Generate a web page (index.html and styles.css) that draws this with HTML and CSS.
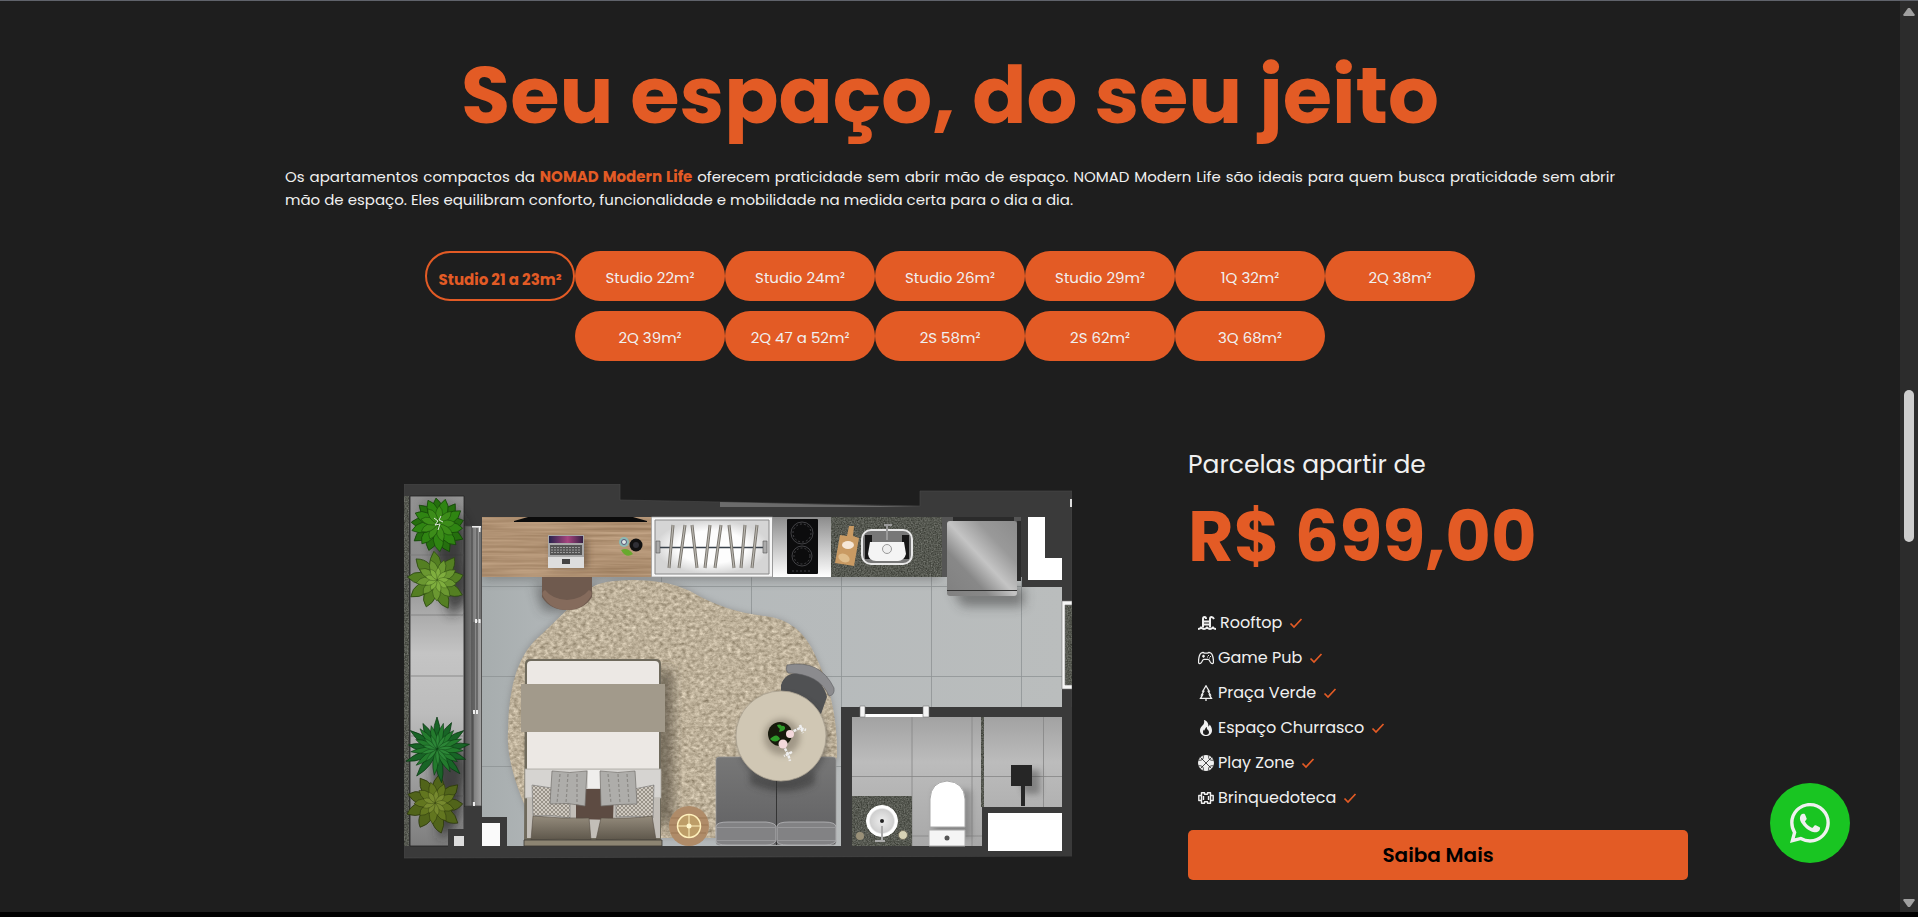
FILE: index.html
```
<!DOCTYPE html>
<html lang="pt-BR">
<head>
<meta charset="utf-8">
<title>NOMAD Modern Life</title>
<link rel="stylesheet" href="styles.css">
</head>
<body>
<div class="page">
<main class="content">
  <section class="intro">
    <h1 class="title">Seu espaço, do seu jeito</h1>
    <p class="lead">Os apartamentos compactos da <strong class="brand">NOMAD Modern Life</strong> oferecem praticidade sem abrir mão de espaço. NOMAD Modern Life são ideais para quem busca praticidade sem abrir mão de espaço. Eles equilibram conforto, funcionalidade e mobilidade na medida certa para o dia a dia.</p>
    <div class="tabs">
      <button class="tab tab-active" type="button">Studio 21 a 23m²</button>
      <button class="tab" type="button">Studio 22m²</button>
      <button class="tab" type="button">Studio 24m²</button>
      <button class="tab" type="button">Studio 26m²</button>
      <button class="tab" type="button">Studio 29m²</button>
      <button class="tab" type="button">1Q 32m²</button>
      <button class="tab" type="button">2Q 38m²</button>
      <button class="tab" type="button">2Q 39m²</button>
      <button class="tab" type="button">2Q 47 a 52m²</button>
      <button class="tab" type="button">2S 58m²</button>
      <button class="tab" type="button">2S 62m²</button>
      <button class="tab" type="button">3Q 68m²</button>
    </div>
  </section>

  <section class="offer">
    <div class="plan">
      <svg class="plan-drawing" viewBox="404 484 668 375" role="img" aria-label="Planta do studio">
        <defs>
          <filter id="rugTex" x="0" y="0" width="1" height="1" color-interpolation-filters="sRGB">
            <feTurbulence type="fractalNoise" baseFrequency=".22 .3" numOctaves="5" seed="4"/>
            <feColorMatrix values=".35 .25 0 0 .44  .35 .25 0 0 .39  .35 .25 0 0 .3  0 0 0 0 1"/>
            <feComposite in2="SourceGraphic" operator="in"/>
          </filter>
          <filter id="granite" x="0" y="0" width="1" height="1" color-interpolation-filters="sRGB">
            <feTurbulence type="fractalNoise" baseFrequency=".7" numOctaves="3" seed="8"/>
            <feColorMatrix values=".35 0 0 0 .16  .35 0 0 0 .17  .35 0 0 0 .14  0 0 0 0 1"/>
            <feComposite in2="SourceGraphic" operator="in"/>
          </filter>
          <filter id="woodTex" x="0" y="0" width="1" height="1" color-interpolation-filters="sRGB">
            <feTurbulence type="fractalNoise" baseFrequency=".012 .35" numOctaves="3" seed="3"/>
            <feColorMatrix values=".2 0 0 0 .59  .2 0 0 0 .47  .2 0 0 0 .35  0 0 0 0 1"/>
            <feComposite in2="SourceGraphic" operator="in"/>
          </filter>
          <filter id="soft" x="-50%" y="-50%" width="200%" height="200%"><feGaussianBlur stdDeviation="6"/></filter>
          <filter id="softer" x="-50%" y="-50%" width="200%" height="200%"><feGaussianBlur stdDeviation="3"/></filter>
          <linearGradient id="balcony" x2="0" y2="1"><stop offset="0" stop-color="#929292"/><stop offset=".2" stop-color="#8b8b8b"/><stop offset=".45" stop-color="#c4c4c4"/><stop offset=".62" stop-color="#bcbcbc"/><stop offset="1" stop-color="#7e7e7e"/></linearGradient>
          <linearGradient id="rail"><stop offset="0" stop-color="#555"/><stop offset=".6" stop-color="#858585"/><stop offset="1" stop-color="#a5a5a5"/></linearGradient>
          <linearGradient id="floor"><stop offset="0" stop-color="#a7adae"/><stop offset=".15" stop-color="#b3b8ba"/><stop offset="1" stop-color="#babdbd"/></linearGradient>
          <linearGradient id="steel" x1="0" y1="1" x2="1" y2="0"><stop offset="0" stop-color="#808080"/><stop offset=".3" stop-color="#888"/><stop offset=".5" stop-color="#c4c4c4"/><stop offset=".72" stop-color="#999"/><stop offset="1" stop-color="#8c8c8c"/></linearGradient>
          <linearGradient id="panel" x2="0" y2="1"><stop offset="0" stop-color="#8c8c8c"/><stop offset="1" stop-color="#fff"/></linearGradient>
          <linearGradient id="bath" x2="0" y2="1"><stop offset="0" stop-color="#a2a2a2"/><stop offset=".35" stop-color="#bcbcbc"/><stop offset="1" stop-color="#a8a8a8"/></linearGradient>
          <radialGradient id="closet"><stop offset=".6" stop-color="#fdfdfd"/><stop offset="1" stop-color="#d5d5d5"/></radialGradient>
          <radialGradient id="basin"><stop offset="0" stop-color="#eee"/><stop offset=".75" stop-color="#cfcfcf"/><stop offset=".85" stop-color="#fff"/></radialGradient>
          <linearGradient id="screen"><stop offset="0" stop-color="#27234e"/><stop offset=".55" stop-color="#a8447f"/><stop offset="1" stop-color="#352044"/></linearGradient>
          <linearGradient id="pillow" x2="0" y2="1"><stop offset="0" stop-color="#948b7c"/><stop offset="1" stop-color="#5e574b"/></linearGradient>
          <linearGradient id="sofa" x2="0" y2="1"><stop offset="0" stop-color="#777"/><stop offset="1" stop-color="#606062"/></linearGradient>
          <pattern id="knit" width="4" height="4" patternUnits="userSpaceOnUse"><path fill="#cfc9c0" d="M0 0h4v4H0z"/><path stroke="#8c857b" stroke-width=".8" d="M0 0l4 4M4 0L0 4"/></pattern>
          <g id="broad">
            <path d="M0 0Q-11-14-2-28Q11-18 0 0"/><path d="M0 0Q-11-14-2-28Q11-18 0 0" transform="rotate(42)"/><path d="M0 0Q-11-14-2-26Q11-18 0 0" transform="rotate(82)"/><path d="M0 0Q-11-14-2-28Q11-18 0 0" transform="rotate(122)"/><path d="M0 0Q-11-14-2-28Q11-18 0 0" transform="rotate(160)"/><path d="M0 0Q-11-14-2-26Q11-18 0 0" transform="rotate(205)"/><path d="M0 0Q-11-14-2-28Q11-18 0 0" transform="rotate(242)"/><path d="M0 0Q-11-14-2-27Q11-18 0 0" transform="rotate(282)"/><path d="M0 0Q-11-14-2-28Q11-18 0 0" transform="rotate(322)"/>
          </g>
          <g id="spiky">
            <path d="M0 0Q-7-16 0-33Q7-14 0 0"/><path d="M0 0Q-7-16 0-31Q7-14 0 0" transform="rotate(28)"/><path d="M0 0Q-7-16 0-33Q7-14 0 0" transform="rotate(54)"/><path d="M0 0Q-7-16 0-33Q7-14 0 0" transform="rotate(80)"/><path d="M0 0Q-7-16 0-30Q7-14 0 0" transform="rotate(108)"/><path d="M0 0Q-7-16 0-33Q7-14 0 0" transform="rotate(136)"/><path d="M0 0Q-7-16 0-33Q7-14 0 0" transform="rotate(172)"/><path d="M0 0Q-7-16 0-33Q7-14 0 0" transform="rotate(218)"/><path d="M0 0Q-7-16 0-33Q7-14 0 0" transform="rotate(250)"/><path d="M0 0Q-7-16 0-29Q7-14 0 0" transform="rotate(280)"/><path d="M0 0Q-7-16 0-33Q7-14 0 0" transform="rotate(306)"/><path d="M0 0Q-7-16 0-30Q7-14 0 0" transform="rotate(332)"/>
          </g>
          <clipPath id="room"><path d="M482 577H1062V707H841V846H482z"/></clipPath>
          <clipPath id="terrace"><path d="M404 484H482V846H404z"/></clipPath>
        </defs>

        <!-- walls -->
        <path fill="#3a3a3a" stroke="#4b4b4b" stroke-width=".6" d="M404 484H620V500L920 506V491H1072V856L404 858z"/>
        <path fill="#6b6b6b" d="M720 502L920 507H720z"/>
        <path fill="#ddd" d="M1070 499h2v8h-2z"/>

        <!-- balcony -->
        <path filter="url(#granite)" d="M404 496h5v350h-5z"/>
        <path fill="url(#balcony)" stroke="#222" stroke-width=".8" d="M410 496h54v350h-54z"/>
        <path stroke="#777" stroke-width=".7" d="M410 555h54M410 615h54M410 676h54M410 736h54M410 796h54"/>
        <g clip-path="url(#terrace)">
          <path fill="#222" opacity=".75" filter="url(#soft)" d="M424 505Q475 500 466 560Q480 600 450 616L440 580zM430 738Q480 738 464 790Q462 826 440 840z"/>
        </g>
        <path fill="url(#rail)" stroke="#444" stroke-width=".7" d="M465 526h16.500v280H465z"/>
        <path fill="none" stroke="#444" d="M472 526v280M477 528v92M480 528v92M474 622v88M477 622v88M473 712v90"/>
        <path fill="#eee" d="M472 526h9v1.500h-9zM479 526h1.500v6H479zM475 619h2v4h-2zM478.500 619h2v4h-2zM473 710h2v4h-2zM476 710h2v4h-2zM473 802h2v4h-2z"/>
        <g stroke-width=".7">
          <g fill="#256f0e" stroke="#123f08"><use href="#broad" transform="translate(438 526)"/><use href="#broad" fill="#2f8512" transform="translate(438 525) rotate(20) scale(.95)"/><use href="#broad" fill="#3c8d19" transform="translate(438 524) rotate(8) scale(.65)"/></g>
          <g fill="#547f22" stroke="#294610"><use href="#broad" transform="translate(436 581) scale(1.060)"/><use href="#broad" fill="#6b9831" transform="translate(437 580) rotate(24) scale(.75)"/><use href="#broad" fill="#7fae3e" transform="translate(437 580) rotate(10) scale(.45)"/></g>
          <g fill="#51641a" stroke="#2a350c"><use href="#broad" transform="translate(435 804) rotate(12) scale(1.060)"/><use href="#broad" fill="#62761f" transform="translate(435 803) rotate(30) scale(.75)"/><use href="#broad" fill="#76892e" transform="translate(435 803) rotate(10) scale(.45)"/></g>
          <g fill="#186426" stroke="#0a3712"><use href="#spiky" transform="translate(437 750)"/><use href="#spiky" fill="#237b2d" transform="translate(437 749) rotate(14) scale(.8)"/><use href="#spiky" fill="#2c8637" transform="translate(437 749) rotate(4) scale(.5)"/></g>
        </g>
        <path fill="none" stroke="#dfe7dc" stroke-width="1" d="M434 518l4 3-3 4 5-1-2 6M441 516l-2 4 4 2"/>

        <!-- main floor -->
        <path fill="url(#floor)" d="M482 577H1062V707H841V846H482z"/>
        <path fill="none" stroke="#8e9394" stroke-width=".8" d="M482 586.500H1062M482 676.500H1062M482 766.500H841M661.500 577v20M751.500 577V700M841.500 577V707M931.500 577V707M1021.500 577V707"/>
        <g clip-path="url(#room)">
          <path fill="#333" opacity=".5" filter="url(#soft)" d="M952 588h72v18h-62zM535 585h62l-4 26h-50zM482 570h460v8H482z"/>
        </g>

        <!-- rug -->
        <path fill="#777" opacity=".5" filter="url(#softer)" d="M615 580Q660 577 690 590Q725 612 765 616Q800 620 815 655Q838 700 838 757L803 838H540Q505 770 507 732Q508 660 540 634Q575 602 590 588z"/>
        <path fill="#c3b49c" filter="url(#rugTex)" d="M615 581Q660 577 690 591Q725 612 765 616Q800 620 815 655Q838 700 837 757L803 838H540Q505 770 508 732Q508 660 542 634Q575 602 590 588Q600 582 615 581z"/>

        <!-- desk -->
        <path fill="#6f5a4e" d="M542 577h50v20q-8 13-25 13t-25-13z"/>
        <path fill="#856b5c" d="M545 590q7 9 22 10q15-1 22-10q4 2 2 6q-8 14-24 14t-24-14q-2-4 2-6z"/>
        <path filter="url(#woodTex)" d="M482 517h170v60H482z"/>
        <path fill="#0b0b0b" d="M514 521l14-4h105l14 4v1H514z"/>
        <path fill="#3b2a1b" opacity=".4" filter="url(#softer)" d="M551 540h37v28h-37z"/>
        <path fill="#a9a9a9" d="M548 535h36v33h-36z"/><path fill="url(#screen)" d="M549 536h34v7h-34z"/><path fill="#555" d="M550 545h32v10h-32z"/><path stroke="#bbb" stroke-width=".7" stroke-dasharray="2 1" d="M551 547.500h30M551 550h30M551 552.500h30"/><path fill="#ddd" d="M548 557h36v11h-36z"/><path fill="#444" d="M562 559h8v5h-8z"/>
        <circle cx="624" cy="542" r="5" fill="#8bb9b5"/><circle cx="624" cy="542" r="2.500" fill="#dfe8e6" stroke="#557"/>
        <circle cx="636" cy="545" r="6.500" fill="#111"/><circle cx="636" cy="545" r="3" fill="#2f2f35"/>
        <path fill="#68a92d" d="M621 550q7-3 12 4q-7 5-12-4z"/>

        <!-- closet -->
        <path fill="#f6f6f6" stroke="#999" stroke-width=".7" d="M651.500 517h121v60h-121z"/><path fill="url(#closet)" stroke="#888" d="M655 520h114v54H655z"/>
        <path stroke="#39424b" stroke-width="1.500" d="M658 547.500h107"/><path fill="#aaa" stroke="#555" stroke-width=".6" d="M656 541h4v12h-4zM763 541h4v12h-4z"/>
        <path stroke="#77736c" stroke-width="3" d="M673 525l-4 43M685 525l-6 43M692 525l5 43M710 525l-5 43M721 525l-6 43M729 525l5 43M745 525l-4 43M757 525l-5 43"/>
        <path stroke="#b9b6af" stroke-width="1.200" d="M673 525l-4 43M685 525l-6 43M692 525l5 43M710 525l-5 43M721 525l-6 43M729 525l5 43M745 525l-4 43M757 525l-5 43"/>

        <!-- cooktop and sink -->
        <path fill="url(#panel)" d="M773 517h58v60h-58z"/><rect x="787" y="519" width="31" height="55" rx="1" fill="#0c0c0d"/>
        <g fill="none" stroke="#58585b" stroke-width=".7"><circle cx="802" cy="533" r="11"/><circle cx="802" cy="533" r="9" stroke-dasharray="2 2"/><circle cx="802" cy="556" r="10"/><circle cx="802" cy="556" r="8" stroke-dasharray="2 2"/><path d="M792 571h20" stroke-dasharray="2 2"/></g>
        <path filter="url(#granite)" d="M831 517h111v60H831z"/>
        <path fill="#c99a63" d="M849 526h5l-1 10 6 2-5 28-19-3 5-28 7 1z"/><ellipse cx="848" cy="545" rx="6" ry="4" fill="#f6e7d8"/><ellipse cx="844" cy="558" rx="6" ry="4" fill="#dfbd8c" transform="rotate(25 844 558)"/>
        <rect x="862" y="530" width="50" height="34" rx="9" fill="#777" stroke="#e8e8e8" stroke-width="2"/><path fill="#161616" d="M865 535h7v24h-7zM902 535h7v24h-7z"/><path fill="#f4f4f4" d="M870 542h34l2 12q-2 7-8 7h-22q-7 0-8-7z"/><circle cx="887" cy="549" r="4.500" fill="#eee" stroke="#999"/><path stroke="#9a9a9a" stroke-width="2" d="M884 525h8M887 524v16"/>

        <!-- fridge -->
        <path fill="#555" d="M942 517h79v60h-79z"/><path fill="#2b2b2b" d="M953 517h61v4h-61zM1017 521h4v60h-4z"/>
        <rect x="947" y="521" width="70" height="75" rx="3" fill="url(#steel)"/><path stroke="#333" d="M947 590.500h70"/>
        <path fill="#3a3a3a" d="M1022 517h40v70h-40z"/><path fill="#fff" d="M1028 517h17v41h17v22h-34z"/>

        <!-- entrance door -->
        <path filter="url(#granite)" d="M1065 605h7v80h-7z"/><path fill="#f5f5f5" stroke="#777" stroke-width=".6" d="M1062 601h10v4h-7v80h7v4h-10z"/>

        <!-- bed -->
        <path fill="#443c33" opacity=".6" filter="url(#soft)" d="M655 670h18v155h-18z"/>
        <path fill="#6f6a5c" d="M525 664q0-5 5-5h126q5 0 5 5v182H524z"/><path fill="#ece8e4" d="M527 665q0-4 4-4h124q4 0 4 4v110H527z"/>
        <path fill="#a29a8b" d="M521 684h144v48H521z"/><path fill="#d6d4d1" stroke="#aaa69e" stroke-width=".8" d="M525 769h136v29H525z"/>
        <path fill="#c2beb8" d="M527 798h133v40H527z"/><path fill="#efeeec" d="M588 770h12v18h-12z"/>
        <path fill="#5d4b42" d="M576 789h38l-1 31-37-1z"/>
        <path fill="url(#knit)" stroke="#777" stroke-width=".6" d="M532 785l20 3 18 15v15q-18-4-37-2zM654 785l-20 4-18 14v14q19-2 37 1z"/>
        <path fill="url(#pillow)" stroke="#554e43" stroke-width=".6" d="M533 816q30 3 56 2l2 22q-30-2-60 0zM601 818q30 1 51-2l4 24q-28-2-60 0z"/>
        <path fill="#aeadaa" stroke="#72706b" stroke-width=".7" d="M552 771q18 3 35 0l-2 35q-17-4-35-2zM600 771q18 3 35 0l2 33q-18 0-36 2z"/>
        <path fill="none" stroke="#8b8985" stroke-width="1.200" stroke-dasharray="3 2" d="M560 774l-3 29M568 774l-2 29M577 774v30M608 774l3 29M618 774l2 29M627 774l2 29"/>
        <path fill="#8c8472" stroke="#3b3833" stroke-width=".8" d="M524 840h138v6H524z"/>

        <!-- lamp -->
        <circle cx="689" cy="826" r="20" fill="#af8b68"/><path stroke="#94704f" stroke-width=".7" d="M671 818h36M669 825h39M671 833h35"/><circle cx="689" cy="826" r="11.500" fill="#bd9d68" stroke="#fff1bd" stroke-width="1.500"/><path stroke="#fff1bd" d="M689 815v22M678 826h22"/><circle cx="689" cy="826" r="2.500" fill="#fff6cc"/>

        <!-- sofa, chair and table -->
        <rect x="716" y="757" width="120" height="88" rx="3" fill="url(#sofa)" stroke="#999" stroke-width=".7"/><path stroke="#343434" d="M776.500 757v88"/>
        <path fill="#333" opacity=".5" filter="url(#softer)" d="M750 770q30 22 65 0v14q-30 16-65 0z"/>
        <path fill="#828284" stroke="#b8b8ba" stroke-width=".8" d="M716 826q1-4 12-4h38q10 1 10 5v13q-1 5-10 5h-39q-11 0-11-4zM777 826q1-4 12-4h35q12 0 12 5v13q-1 5-11 5h-37q-11 0-11-4z"/>
        <path stroke="#99999b" d="M716 827.500h59M778 827.500h57M716 840.500h59M778 840.500h57"/>
        <path fill="#505153" d="M781 685q4-13 19-12 23 5 27 24l-6 17-40-22z"/><path fill="#8b8b8e" stroke="#5d5d5f" stroke-width=".6" d="M787 665q33-6 47 23 1 7-5 8-9-22-41-23-3-3-1-8z"/>
        <circle cx="783" cy="740" r="45" fill="#333" opacity=".4" filter="url(#softer)"/><circle cx="781" cy="736" r="45" fill="#d0c7b4" stroke="#aaa190" stroke-width=".8"/>
        <circle cx="782" cy="737" r="18" fill="#675f51" opacity=".45" filter="url(#softer)"/><circle cx="780" cy="734" r="12" fill="#171a0c"/><path fill="#2f9b2a" d="M770 739q7-7 10 0-5 5-10 0zM779 732q2-9 6-5 1 4-6 5zM777 725q5-2 6 5-5-1-6-5z"/><path fill="none" stroke="#eee" stroke-width="2.500" stroke-dasharray="3 1" d="M790 733l10-5 6 2M800 725l3 8M783 745l5 9 2 7M792 752l-8 4"/><g fill="#f4d9dc"><circle cx="790" cy="734" r="4"/><circle cx="783" cy="744" r="4.500"/></g>

        <!-- bathroom -->
        <path fill="#3a3a3a" d="M841.500 707H1072V856H841.500z"/><path fill="url(#bath)" d="M852 717h130v129H852zM984 717h78v90h-78z"/>
        <path stroke="#858585" stroke-width=".8" d="M852 776.500h210M912 717v129M972 717v129M1043.500 717v90M912 836h70"/>
        <path filter="url(#granite)" d="M981 717h3v90h-3z"/>
        <path fill="#fff" d="M864 714h60v3h-60z"/><path fill="#f4f4f4" stroke="#777" stroke-width=".6" d="M860 706h5v11h-5zM923 706h6v11h-6z"/>
        <path filter="url(#granite)" d="M852 796h60v50h-60z"/><circle cx="882" cy="821" r="15.500" fill="url(#basin)" stroke="#fff"/><circle cx="882" cy="821" r="2" fill="#222"/><path stroke="#aaa" stroke-width="2" d="M882 826v15M875 841h10"/><circle cx="860" cy="836" r="4" fill="#999078"/><circle cx="903" cy="835" r="4.500" fill="#d8d2b5" stroke="#777260"/>
        <path fill="#444" opacity=".35" filter="url(#softer)" d="M934 790h37v48h-37z"/><path fill="#fff" stroke="#a8a8a8" d="M930 827V799q1-17 17-18 17 1 18 18v28z"/><path fill="#f5f5f5" stroke="#aaa" d="M929 830h36v16h-36z"/><circle cx="947" cy="838" r="2.500" fill="#555"/>
        <path fill="#333" opacity=".4" filter="url(#softer)" d="M1016 770h24v24h-16z"/><path fill="#262626" d="M1011 765h21v21h-7v20h-4v-20h-10z"/>
        <path fill="#fff" d="M988 813h74v38h-74z"/>

        <!-- shafts -->
        <path fill="#3a3a3a" d="M464 807h18v10h25v30h-59v-18h16z"/><path fill="#fafafa" d="M482 823h18v23h-18z"/><path fill="#ddd" d="M454 836h10v10h-10z"/>
      </svg>
    </div>

    <div class="details">
      <p class="price-label">Parcelas apartir de</p>
      <p class="price">R$ 699,00</p>
      <ul class="amenities">
        <li class="amenity"><svg class="icon icon-wide" viewBox="0 0 18 16"><path d="M5 12.500V4q0-2 1.500-2T8 4M12 12.500V4q0-2 1.500-2T16 4M5 6.500h7M5 9.500h7" fill="none" stroke="currentColor" stroke-width="2"/><path d="M0 14q2 0 3-1.500Q4.500 14 6 14t3-1.500q1.500 1.500 3 1.500t3-1.500q1 1.500 3 1.500" fill="none" stroke="currentColor" stroke-width="1.800"/></svg>Rooftop<svg class="check" viewBox="0 0 16 16"><path d="M2.500 8.500l3.500 3.500 7.500-8"/></svg></li>
        <li class="amenity"><svg class="icon" viewBox="0 0 16 16"><path d="M3.300 3q2-1 3 .1h3.400q1-1.100 3-.1c1.500 1 2.700 5 2.800 9 0 2.200-2 2-3.200 0-.8-1.700-1.400-2.600-2.200-2.600H5.900c-.8 0-1.400.9-2.200 2.600-1.200 2-3.200 2.200-3.200 0C.6 8 1.800 4 3.300 3zM4 6.200h3M5.500 4.700v3" fill="none" stroke="currentColor" stroke-width="1.300"/><path d="M10 5h1v1h-1zM12 6h1v1h-1zM9 6.500h1v1H9zM11 7.500h1v1h-1z" fill="currentColor"/></svg>Game Pub<svg class="check" viewBox="0 0 16 16"><path d="M2.500 8.500l3.500 3.500 7.500-8"/></svg></li>
        <li class="amenity"><svg class="icon" viewBox="0 0 16 16"><path d="M8 .8Q6.500 3.500 4.800 6.200L5.800 6.300 3.600 9.800H4.600L2.500 13.400H13.500L11.400 9.800H12.400L10.200 6.300 11.200 6.200Q9.500 3.500 8 .8zM8 13.500V16" fill="none" stroke="currentColor" stroke-width="1.300"/></svg>Praça Verde<svg class="check" viewBox="0 0 16 16"><path d="M2.500 8.500l3.500 3.500 7.500-8"/></svg></li>
        <li class="amenity"><svg class="icon" viewBox="0 0 16 16"><path fill="currentColor" d="M8 16c3.314 0 6-2 6-5.500 0-1.500-.5-4-2.500-6 .25 1.500-1.250 2-1.250 2C11 4 9 .5 6 0c.357 2 .5 4-2 6-1.250 1-2 2.729-2 4.500C2 14 4.686 16 8 16m0-1c-1.657 0-3-1-3-2.750 0-.75.25-2 1.250-3C6.125 10 7 10.500 7 10.500c-.375-1.250.5-3.250 2-3.500-.179 1-.25 2 1 3 .625.500 1 1.364 1 2.250C11 14 9.657 15 8 15"/></svg>Espaço Churrasco<svg class="check" viewBox="0 0 16 16"><path d="M2.500 8.500l3.500 3.500 7.500-8"/></svg></li>
        <li class="amenity"><svg class="icon" viewBox="0 0 16 16"><circle cx="8" cy="8" r="8" fill="currentColor"/><path d="M2.300 2.300l11.400 11.400M13.700 2.300L2.300 13.700M5.200.2Q6.500 6 .2 5.200M10.800 15.800Q9.500 10 15.800 10.800M10.800.2Q9.500 6 15.800 5.200M5.200 15.800Q6.500 10 .2 10.800" fill="none" stroke="#1e1e1e" stroke-width=".8"/></svg>Play Zone<svg class="check" viewBox="0 0 16 16"><path d="M2.500 8.500l3.500 3.500 7.500-8"/></svg></li>
        <li class="amenity"><svg class="icon" viewBox="0 0 16 16"><path d="M3.500 2.700h3v1.500h3V2.700h3v10.600h-3v-1.500h-3v1.500h-3zM3.500 5.500H.8v5h2.700M12.500 5.500h2.700v5h-2.700M5.500 6v4M10.500 6v4" fill="none" stroke="currentColor" stroke-width="1.400" stroke-linejoin="round"/></svg>Brinquedoteca<svg class="check" viewBox="0 0 16 16"><path d="M2.500 8.500l3.500 3.500 7.500-8"/></svg></li>
      </ul>
      <button class="cta" type="button">Saiba Mais</button>
    </div>
  </section>
</main>

<div class="scrollbar" aria-hidden="true">
  <svg class="arrow" viewBox="0 0 14 10"><path d="M6 1h2l5 7-1 1H2L1 8z"/></svg>
  <div class="track"><div class="thumb"></div></div>
  <svg class="arrow" viewBox="0 0 14 10"><path d="M6 9h2l5-7-1-1H2L1 2z"/></svg>
</div>
</div>
<a class="whatsapp" href="#" aria-label="WhatsApp"><svg class="whatsapp-icon" viewBox="0 0 16 16"><path d="M13.601 2.326A7.850 7.850 0 0 0 7.994 0C3.627 0 .068 3.558.064 7.926c0 1.399.366 2.760 1.057 3.965L0 16l4.204-1.102a7.900 7.900 0 0 0 3.790.965h.004c4.368 0 7.926-3.558 7.930-7.930A7.900 7.900 0 0 0 13.600 2.326zM7.994 14.521a6.600 6.600 0 0 1-3.356-.920l-.240-.144-2.494.654.666-2.433-.156-.251a6.560 6.560 0 0 1-1.007-3.505c0-3.626 2.957-6.584 6.591-6.584a6.560 6.560 0 0 1 4.660 1.931 6.560 6.560 0 0 1 1.928 4.660c-.004 3.639-2.961 6.592-6.592 6.592m3.615-4.934c-.197-.099-1.170-.578-1.353-.646-.182-.065-.315-.099-.445.099-.133.197-.513.646-.627.775-.114.133-.232.148-.430.050-.197-.100-.836-.308-1.592-.985-.590-.525-.985-1.175-1.103-1.372-.114-.198-.011-.304.088-.403.087-.088.197-.232.296-.346.100-.114.133-.198.198-.330.065-.134.034-.248-.015-.347-.050-.099-.445-1.076-.612-1.470-.160-.389-.323-.335-.445-.340-.114-.007-.247-.007-.380-.007a.730.730 0 0 0-.529.247c-.182.198-.691.677-.691 1.654s.710 1.916.810 2.049c.098.133 1.394 2.132 3.383 2.992.470.205.840.326 1.129.418.475.152.904.129 1.246.080.380-.058 1.171-.480 1.338-.943.164-.464.164-.860.114-.943-.049-.084-.182-.133-.380-.232"/></svg></a>
<footer class="footer"></footer>
</body>
</html>
```
FILE: styles.css
```
:root {
  --orange: #e35b25;
  --dark: #1e1e1e;
  --light: #f0f0f0;
}

* { box-sizing: border-box; }

body {
  margin: 0;
  min-height: 100vh;
  display: flex;
  flex-direction: column;
  background: var(--dark);
  color: var(--light);
  border-top: 1px solid #60636b;
  font-family: Poppins, Inter, sans-serif;
  font-size: 16px;
}

h1, p, ul { margin: 0; padding: 0; }
button { font-family: inherit; cursor: pointer; }

.page { flex: 1; display: flex; }
.content { flex: 1; padding-top: 34px; }

.intro {
  width: 70%;
  margin: 0 auto;
}

.title {
  color: var(--orange);
  font-size: 80px;
  font-weight: 700;
  line-height: 120px;
  text-align: center;
  white-space: nowrap;
}

.lead {
  margin-top: 10px;
  font-size: 15px;
  line-height: 23px;
  text-align: justify;
}

.brand { color: var(--orange); }

.tabs {
  max-width: 1050px;
  margin: 40px auto 0;
  display: flex;
  flex-wrap: wrap;
  justify-content: center;
  row-gap: 10px;
}

.tab {
  width: 150px;
  height: 50px;
  padding: 2px 0 0;
  border: 0;
  border-radius: 25px;
  background: var(--orange);
  color: var(--light);
  font-size: 15px;
  white-space: nowrap;
}

.tab-active {
  padding-top: 6px;
  border: 2px solid var(--orange);
  background: transparent;
  color: var(--orange);
  font-weight: 700;
}

.offer {
  margin-top: 84px;
  padding: 0 212px 0 288px;
  display: grid;
  grid-template-columns: minmax(0, 1fr) 500px;
}

.plan {
  padding-top: 39px;
  display: flex;
  justify-content: center;
  align-items: flex-start;
}

.plan-drawing { width: 100%; max-width: 668px; display: block; }

.details { display: flex; flex-direction: column; }
.price-label { font-size: 25px; line-height: 39px; }

.price {
  color: var(--orange);
  font-size: 70px;
  font-weight: 700;
  line-height: 106px;
}

.amenities {
  margin-top: 15px;
  padding-left: 10px;
  list-style: none;
}

.amenity {
  height: 35px;
  display: flex;
  align-items: center;
  gap: 4px;
}

.icon { width: 16px; height: 16px; }
.icon-wide { width: 18px; }
.check {
  width: 16px;
  height: 16px;
  margin-left: 2px;
  fill: none;
  stroke: var(--orange);
  stroke-width: 1.7;
}

.cta {
  height: 50px;
  margin-top: 15px;
  border: 0;
  border-radius: 5px;
  background: var(--orange);
  color: #000;
  font-size: 20px;
  font-weight: 600;
}

.scrollbar {
  width: 18px;
  padding: 6px 2px 4px;
  display: flex;
  flex-direction: column;
  align-items: center;
  background: #2c2c2c;
}

.arrow { width: 14px; height: 10px; fill: #a0a0a0; }

.track {
  flex: 1;
  width: 10px;
  display: grid;
  grid-template-rows: 373fr 152fr 356fr;
}

.thumb { grid-row: 2; border-radius: 5px; background: #cecece; }

.whatsapp {
  position: fixed;
  right: 68px;
  bottom: 54px;
  width: 80px;
  height: 80px;
  display: flex;
  align-items: center;
  justify-content: center;
  border-radius: 50%;
  background: #19c522;
  color: var(--light);
}

.whatsapp-icon { width: 40px; height: 40px; fill: currentColor; }

.footer { height: 5px; background: #000; }
```
